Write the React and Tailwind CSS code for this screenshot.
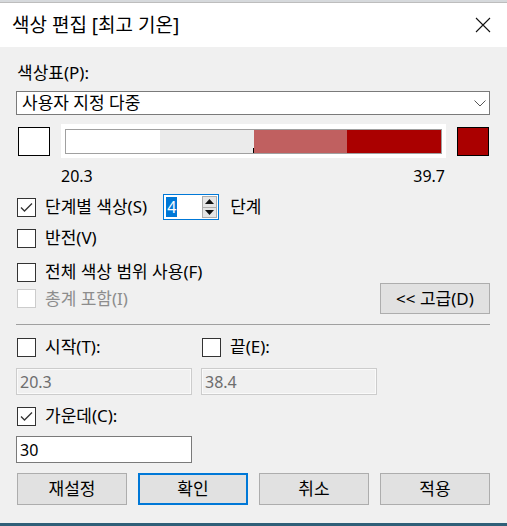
import React from 'react';

const font = { fontFamily: '"Noto Sans", "Noto Sans CJK KR", sans-serif' };

function Check({ checked, disabled }) {
  return (
    <span
      className={`flex h-[19px] w-[19px] shrink-0 items-center justify-center border bg-white ${
        disabled ? 'border-[#cccccc]' : 'border-[#333333]'
      }`}
    >
      {checked && (
        <svg width="13" height="11" viewBox="0 0 13 11">
          <path d="M1 5.5 L4.5 9 L12 1.5" fill="none" stroke="#333" strokeWidth="1.3" />
        </svg>
      )}
    </span>
  );
}

function CheckRow({ label, checked, disabled, className = '' }) {
  return (
    <div className={`flex items-center gap-[9px] ${className}`}>
      <Check checked={checked} disabled={disabled} />
      <span className={disabled ? 'text-[#8d8d8d]' : 'text-black'}>{label}</span>
    </div>
  );
}

function Btn({ children, primary }) {
  return (
    <button
      className={`flex h-[32px] w-[110px] items-center justify-center bg-[#e1e1e1] text-black ${
        primary ? 'border-2 border-[#0078d7]' : 'border border-[#adadad]'
      }`}
    >
      {children}
    </button>
  );
}

export default function App() {
  return (
    <div className="flex h-[526px] w-[507px] flex-col overflow-hidden text-[17px] leading-[20px]" style={font}>
      <div className="h-[3px] border-b border-[#bdbdbd] bg-[#d6d9dc]" />
      <div className="flex h-[44px] items-center justify-between bg-white pl-3 pr-[16px]">
        <span className="text-[19px] text-black">색상 편집 [최고 기온]</span>
        <svg width="16" height="16" viewBox="0 0 16 16">
          <path d="M1 1 L15 15 M15 1 L1 15" stroke="#111" strokeWidth="1.1" />
        </svg>
      </div>

      <div className="flex flex-1 flex-col bg-[#f0f0f0] pl-4 pr-[17px] pt-4">
        <div className="pl-px text-black">색상표(P):</div>

        <div className="mt-2 flex h-[24px] items-center justify-between border border-[#7a7a7a] bg-white pl-[5px] pr-[3px]">
          <span>사용자 지정 다중</span>
          <svg width="12" height="7" viewBox="0 0 12 7">
            <path d="M0.5 0.5 L6 6 L11.5 0.5" fill="none" stroke="#555" strokeWidth="1" />
          </svg>
        </div>

        <div className="mt-[9px] flex h-[34px] items-center pl-[2px]">
          <div className="h-[29px] w-[32px] border border-black bg-white" />
          <div className="ml-[11px] flex h-[34px] w-[385px] items-center bg-white px-[4px]">
            <div className="relative flex h-[25px] flex-1 border border-[#a0a0a0]">
              <div className="flex-1 bg-white" />
              <div className="flex-1 bg-[#ebebeb]" />
              <div className="flex-1 bg-[#c06060]" />
              <div className="flex-1 bg-[#aa0000]" />
              <div className="absolute bottom-0 left-[187px] h-[5px] w-px bg-black" />
            </div>
          </div>
          <div className="ml-[11px] h-[29px] w-[32px] border border-black bg-[#aa0000]" />
        </div>

        <div className="mt-[8px] flex justify-between pl-[45px] pr-[45px] text-[16px]">
          <span>20.3</span>
          <span>39.7</span>
        </div>

        <div className="mt-[8px] flex h-[26px] items-center pl-px">
          <CheckRow label="단계별 색상(S)" checked />
          <div className="ml-[16px] flex h-[26px] w-[56px] items-center border border-[#0078d7] bg-white pl-[2px] pr-[1px] text-[16px]">
            <span className="bg-[#0078d7] px-px text-white">4</span>
            <div className="ml-auto flex h-[22px] w-[15px] flex-col border border-[#adadad] bg-[#e5e5e5]">
              <div className="flex flex-1 items-center justify-center border-b border-[#adadad]">
                <svg width="9" height="5" viewBox="0 0 9 5">
                  <path d="M0 5 L4.5 0 L9 5 Z" fill="#111" />
                </svg>
              </div>
              <div className="flex flex-1 items-center justify-center">
                <svg width="9" height="5" viewBox="0 0 9 5">
                  <path d="M0 0 L4.5 5 L9 0 Z" fill="#111" />
                </svg>
              </div>
            </div>
          </div>
          <span className="ml-[11px]">단계</span>
        </div>

        <CheckRow label="반전(V)" className="mt-[8px] h-[20px] pl-px" />
        <CheckRow label="전체 색상 범위 사용(F)" className="mt-[14px] h-[20px] pl-px" />

        <div className="mt-px flex h-[31px] items-center justify-between pl-px">
          <CheckRow label="총계 포함(I)" disabled />
          <button className="flex h-[31px] w-[110px] items-center justify-center border border-[#adadad] bg-[#e1e1e1] text-black">
            &lt;&lt; 고급(D)
          </button>
        </div>

        <div className="mt-[10px] h-px bg-[#a0a0a0]" />

        <div className="mt-[12px] flex h-[20px] items-center gap-[9px] pl-px">
          <div className="w-[176px]">
            <CheckRow label="시작(T):" />
          </div>
          <CheckRow label="끝(E):" />
        </div>

        <div className="mt-[11px] flex gap-[9px] text-[16px]">
          <div className="flex h-[27px] w-[176px] items-center border border-[#cccccc] bg-[#f0f0f0] pl-[3px] text-[#6d6d6d] shadow-[inset_0_0_0_1px_#fafafa]">
            20.3
          </div>
          <div className="flex h-[27px] w-[176px] items-center border border-[#cccccc] bg-[#f0f0f0] pl-[3px] text-[#6d6d6d] shadow-[inset_0_0_0_1px_#fafafa]">
            38.4
          </div>
        </div>

        <CheckRow label="가운데(C):" checked className="mt-[11px] h-[20px] pl-px" />

        <div className="mt-[10px] flex h-[27px] w-[176px] items-center border border-[#7a7a7a] bg-white pl-[3px] text-[16px] text-black">
          30
        </div>

        <div className="mt-[10px] flex justify-between pl-px">
          <Btn>재설정</Btn>
          <Btn primary>확인</Btn>
          <Btn>취소</Btn>
          <Btn>적용</Btn>
        </div>
      </div>
      <div className="h-[3px] bg-[#2f5f78]" />
    </div>
  );
}
